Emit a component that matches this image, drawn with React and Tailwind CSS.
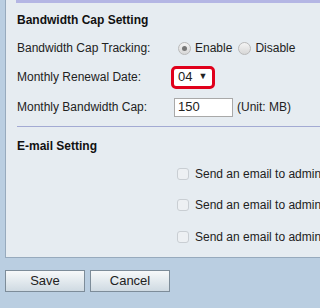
import React from 'react';

function Radio({ checked }) {
  return (
    <span className="inline-flex shrink-0 w-[13px] h-[13px] rounded-full border border-[#b9b9b9] bg-gradient-to-b from-[#f4f4f4] to-[#d8d8d8] items-center justify-center mr-[4px]">
      {checked && <span className="w-[5px] h-[5px] rounded-full bg-[#777]" />}
    </span>
  );
}

function Check() {
  return <span className="inline-block shrink-0 w-[12px] h-[12px] rounded-[3px] border border-[#c9ced3] bg-[#edf0f3]" />;
}

function EmailRow() {
  return (
    <div className="flex items-center gap-[6px] h-[31.5px]">
      <Check />
      <span>Send an email to administrator</span>
    </div>
  );
}

export default function App() {
  const font = { fontFamily: '"Liberation Sans", Arial, sans-serif' };
  return (
    <div className="w-[320px] h-[308px] bg-[#bacee1] overflow-hidden text-[12px] text-[#222]" style={font}>
      <div className="ml-[5px] h-[258px] bg-[#e6ecf1] border-l border-b border-[#97aabd]">
        <div className="ml-[10px] h-[3px] bg-[#b4b6e4]" />
        <div className="pl-[11px]">
          <div className="flex items-center mt-[3px] h-[28px] font-bold text-[#111]">Bandwidth Cap Setting</div>
          <div className="flex items-center h-[28px]">
            <span className="w-[161px] shrink-0">Bandwidth Cap Tracking:</span>
            <Radio checked />
            <span>Enable</span>
            <span className="w-[6px]" />
            <Radio />
            <span>Disable</span>
          </div>
          <div className="flex items-center h-[30px]">
            <span className="w-[154px] shrink-0">Monthly Renewal Date:</span>
            <span className="inline-flex items-center h-[23px] w-[44px] border-[3px] border-[#e0001b] rounded-[5px] bg-white pl-[4px] text-[13px]">
              <span>04</span>
              <span className="text-[9px] ml-[6px]">▼</span>
            </span>
          </div>
          <div className="flex items-center h-[30px]">
            <span className="w-[157px] shrink-0">Monthly Bandwidth Cap:</span>
            <span className="inline-flex items-center h-[19px] w-[59px] border border-[#a9a9a9] bg-white pl-[3px] text-[13px]">150</span>
            <span className="ml-[4px]">(Unit: MB)</span>
          </div>
          <div className="h-px bg-[#a3aad3] mt-[4px]" />
          <div className="flex items-center h-[31px] pt-[7px] font-bold text-[#111]">E-mail Setting</div>
          <div className="pl-[160px] whitespace-nowrap">
            <EmailRow />
            <EmailRow />
            <EmailRow />
          </div>
        </div>
      </div>
      <div className="flex gap-[5px] ml-[5px] mt-[12px]">
        <button className="w-[80px] h-[22px] border border-[#7d8c99] bg-gradient-to-b from-[#f7f9fa] to-[#cfdae2] text-[13px] text-[#222]">Save</button>
        <button className="w-[80px] h-[22px] border border-[#7d8c99] bg-gradient-to-b from-[#f7f9fa] to-[#cfdae2] text-[13px] text-[#222]">Cancel</button>
      </div>
    </div>
  );
}
